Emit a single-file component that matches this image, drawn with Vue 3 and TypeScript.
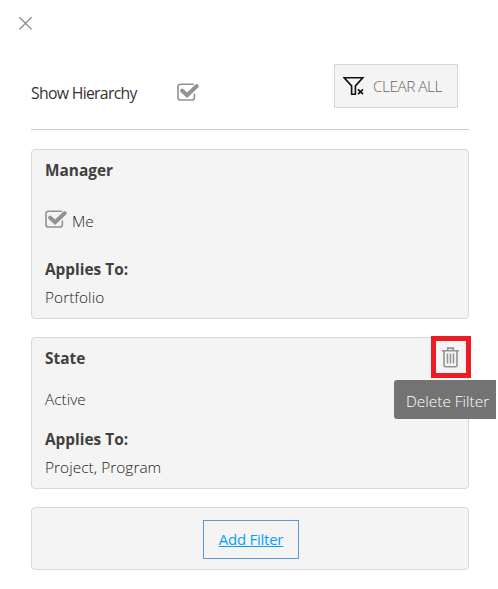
<script setup lang="ts">
interface Filter {
  title: string
  value: string
  checked?: boolean
  applies: string
  deletable?: boolean
  key: string
}

const filters: Filter[] = [
  { key: 'manager', title: 'Manager', value: 'Me', checked: true, applies: 'Portfolio' },
  { key: 'state', title: 'State', value: 'Active', applies: 'Project, Program', deletable: true },
]
</script>

<template>
  <main class="panel">
    <button class="close" aria-label="Close">
      <svg width="13" height="14" viewBox="0 0 13 14"><path d="M.4 1.2 12.6 13.4M12.6 1.2.4 13.4" fill="none" stroke="#858585" stroke-width="1.3" /></svg>
    </button>
    <header class="top">
      <span class="hierarchy">Show Hierarchy</span>
      <svg class="check" width="22" height="19" viewBox="0 0 22 19">
        <path d="M17 1.2H3.6A2.6 2.6 0 0 0 1 3.8v10.6A2.6 2.6 0 0 0 3.6 17h11.2a2.6 2.6 0 0 0 2.6-2.6v-4" fill="none" stroke="#929292" stroke-width="1.6" />
        <path d="m5.2 7.7 4.9 4.6L19.6 3.2" fill="none" stroke="#929292" stroke-width="4" stroke-linecap="round" />
      </svg>
      <button class="clear">
        <svg width="22" height="20" viewBox="0 0 22 20">
          <path d="M1.2 1.8h18.6l-7.4 8.1v8.3H8.6V9.9z" fill="none" stroke="#111" stroke-width="1.6" />
          <path d="m15 13.4 5 4.8m0-4.8-5 4.8" fill="none" stroke="#111" stroke-width="1.6" />
        </svg>
        <span>CLEAR ALL</span>
      </button>
    </header>
    <section v-for="f in filters" :key="f.key" class="card" :class="f.key">
      <h2>{{ f.title }}</h2>
      <div class="value">
        <svg v-if="f.checked" class="check" width="22" height="19" viewBox="0 0 22 19">
          <path d="M17 1.2H3.6A2.6 2.6 0 0 0 1 3.8v10.6A2.6 2.6 0 0 0 3.6 17h11.2a2.6 2.6 0 0 0 2.6-2.6v-4" fill="none" stroke="#929292" stroke-width="1.6" />
          <path d="m5.2 7.7 4.9 4.6L19.6 3.2" fill="none" stroke="#929292" stroke-width="4" stroke-linecap="round" />
        </svg>
        <span>{{ f.value }}</span>
      </div>
      <h3>Applies To:</h3>
      <p>{{ f.applies }}</p>
      <template v-if="f.deletable">
        <button class="delete" aria-label="Delete Filter">
          <svg width="17" height="21" viewBox="0 0 17 21" fill="none" stroke="#929292">
            <path d="M0 3.7h17M5.7 3.2V1.1h5.6v2.1M2 4v14.2q0 1.5 1.5 1.5h10q1.5 0 1.5-1.5V4" stroke-width="1.6" />
            <path d="M5.5 6.5v10M8.5 6.5v10M11.5 6.5v10" stroke-width="1.5" />
          </svg>
        </button>
        <div class="tooltip">Delete Filter</div>
      </template>
    </section>
    <section class="card add">
      <a>Add Filter</a>
    </section>
  </main>
</template>

<style>
body { margin: 0; background: #fff; overflow: hidden; }
</style>
<style scoped>
.panel { box-sizing: border-box; width: 498px; height: 589px; padding: 16px 29px 0 31px; font: 300 15.4px/22px "Open Sans", "Noto Sans", sans-serif; color: #222; }
button { padding: 0; margin: 0; font: inherit; color: inherit; background: none; border: 0; }
svg { display: block; flex: none; }
.close { display: block; width: 13px; height: 14px; margin-left: -12px; }
.top { box-sizing: border-box; display: flex; height: 100px; padding-top: 34px; border-bottom: 1px solid #ccc; }
.hierarchy { width: 146px; margin-top: 18px; font-weight: 400; font-size: 15.8px; letter-spacing: -.7px; color: #333; }
.top .check { margin-top: 19px; }
.clear { box-sizing: border-box; display: flex; align-items: center; width: 124px; height: 44px; margin-left: auto; margin-right: 11px; padding-left: 8px; gap: 8px; border: 1px solid #d5d5d5; background: #f4f4f4; color: #666; letter-spacing: -.5px; white-space: nowrap; }
.clear span { margin-top: 1px; }
.card { position: relative; box-sizing: border-box; width: 438px; margin-top: 18px; padding: 10px 13px 0; border: 1px solid #d8d8d8; border-radius: 4px; background: #f4f4f4; }
.manager { height: 170px; margin-top: 19px; }
.state { height: 152px; }
h2, h3 { margin: 0; font-size: 15.4px; line-height: 22px; font-weight: 700; color: #404040; }
.value { display: flex; gap: 5px; }
.value span { padding-top: 1px; margin-bottom: -1px; }
.manager .value { margin: 28px 0 27px; }
.state .value { margin: 18px 0 19px; }
p { margin: 6px 0 0; letter-spacing: .05px; }
.delete { box-sizing: border-box; position: absolute; right: -3px; top: -2px; display: grid; place-items: center; width: 40px; height: 42px; padding-right: 2px; border: 5px solid #ed1c24; }
.tooltip { box-sizing: border-box; position: absolute; left: 362px; top: 42px; width: 102px; height: 39px; padding: 11px 0 0 12px; border-radius: 3px 0 0 3px; background: #737373; color: #fff; white-space: nowrap; }
.add { display: flex; justify-content: center; height: 63px; padding: 12px 0; }
.add a { box-sizing: border-box; width: 96px; height: 39px; margin-left: 2px; padding-top: 7px; border: 1px solid #5b9bd5; text-align: center; color: #0b9ff0; font-weight: 400; text-decoration: underline; text-underline-offset: 1px; font-size: 15px; letter-spacing: -.25px; }
</style>
